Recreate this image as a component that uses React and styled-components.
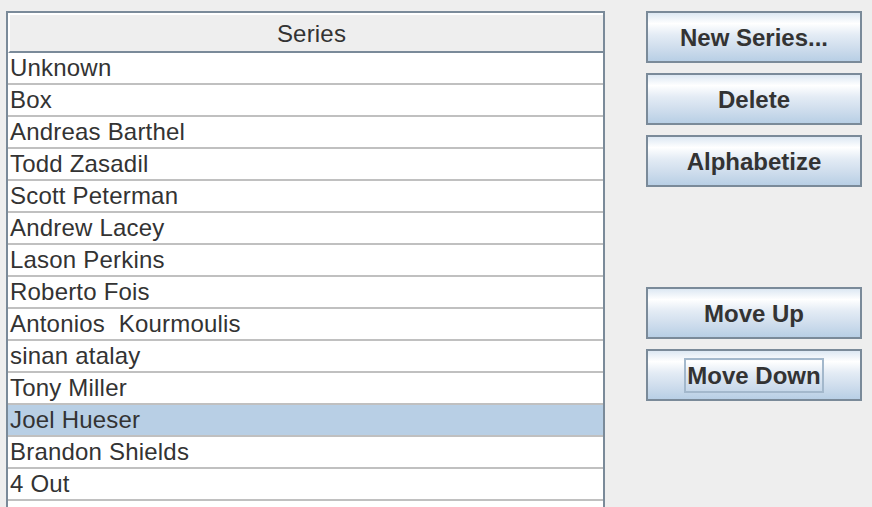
import React from 'react';
import styled, { createGlobalStyle } from 'styled-components';

const series = [
  'Unknown',
  'Box',
  'Andreas Barthel',
  'Todd Zasadil',
  'Scott Peterman',
  'Andrew Lacey',
  'Lason Perkins',
  'Roberto Fois',
  'Antonios  Kourmoulis',
  'sinan atalay',
  'Tony Miller',
  'Joel Hueser',
  'Brandon Shields',
  '4 Out',
  '',
];

const buttons = [
  { label: 'New Series...', group: 0 },
  { label: 'Delete', group: 0 },
  { label: 'Alphabetize', group: 0 },
  { label: 'Move Up', group: 1 },
  { label: 'Move Down', group: 1, focused: true },
];

const GlobalStyle = createGlobalStyle`
  html, body {
    margin: 0;
    padding: 0;
    background: #eeeeee;
    overflow: hidden;
    font-family: 'Liberation Sans', Arial, sans-serif;
  }
`;

const Frame = styled.div`
  display: flex;
  align-items: flex-start;
  padding: 11px 10px 0 6px;
  height: 507px;
  box-sizing: border-box;
  overflow: hidden;
`;

const ListPanel = styled.div`
  width: 599px;
  height: 620px;
  box-sizing: border-box;
  border: 2px solid #7a8a99;
  background: #ffffff;
  flex-shrink: 0;
`;

const HeaderCell = styled.div`
  height: 40px;
  box-sizing: border-box;
  border-top: 2px solid #ffffff;
  border-left: 2px solid #ffffff;
  border-bottom: 2px solid #7a8a99;
  background: #eeeeee;
  color: #333333;
  font-size: 24px;
  line-height: 37px;
  text-align: center;
  padding-left: 10px;
  letter-spacing: 0.2px;
`;

const Row = styled.div`
  height: 30px;
  border-bottom: 2px solid #c0c0c0;
  background: ${props => (props.selected ? '#b8cfe5' : '#ffffff')};
  color: #333333;
  font-size: 24px;
  line-height: 30px;
  padding-left: 2px;
  white-space: pre;
  letter-spacing: 0.2px;
`;

const ButtonColumn = styled.div`
  display: flex;
  flex-direction: column;
  margin-left: 41px;
  width: 216px;
`;

const ButtonGroup = styled.div`
  display: flex;
  flex-direction: column;
  gap: 10px;
  margin-top: ${props => props.offset || 0}px;
`;

const Button = styled.div`
  height: 52px;
  box-sizing: border-box;
  border: 2px solid #7a8a99;
  background: linear-gradient(
    to bottom,
    #dde8f3 0%,
    #ffffff 22%,
    #e4ecf5 45%,
    #cddcec 75%,
    #b8cfe5 100%
  );
  display: flex;
  align-items: center;
  justify-content: center;
  color: #333333;
  font-size: 24px;
  font-weight: bold;
`;

const Label = styled.span`
  box-sizing: border-box;
  line-height: 31px;
  padding: 0 1px;
  border: 2px solid ${props => (props.focused ? '#a3b8cc' : 'transparent')};
`;

const App = () => {
  const groups = [0, 1].map(g => buttons.filter(b => b.group === g));
  return (
    <>
      <GlobalStyle />
      <Frame>
        <ListPanel>
          <HeaderCell>Series</HeaderCell>
          {series.map((name, i) => (
            <Row key={i} selected={name === 'Joel Hueser'}>
              {name}
            </Row>
          ))}
        </ListPanel>
        <ButtonColumn>
          {groups.map((group, i) => (
            <ButtonGroup key={i} offset={i === 0 ? 0 : 100}>
              {group.map(b => (
                <Button key={b.label}>
                  <Label focused={b.focused}>{b.label}</Label>
                </Button>
              ))}
            </ButtonGroup>
          ))}
        </ButtonColumn>
      </Frame>
    </>
  );
};

export default App;
